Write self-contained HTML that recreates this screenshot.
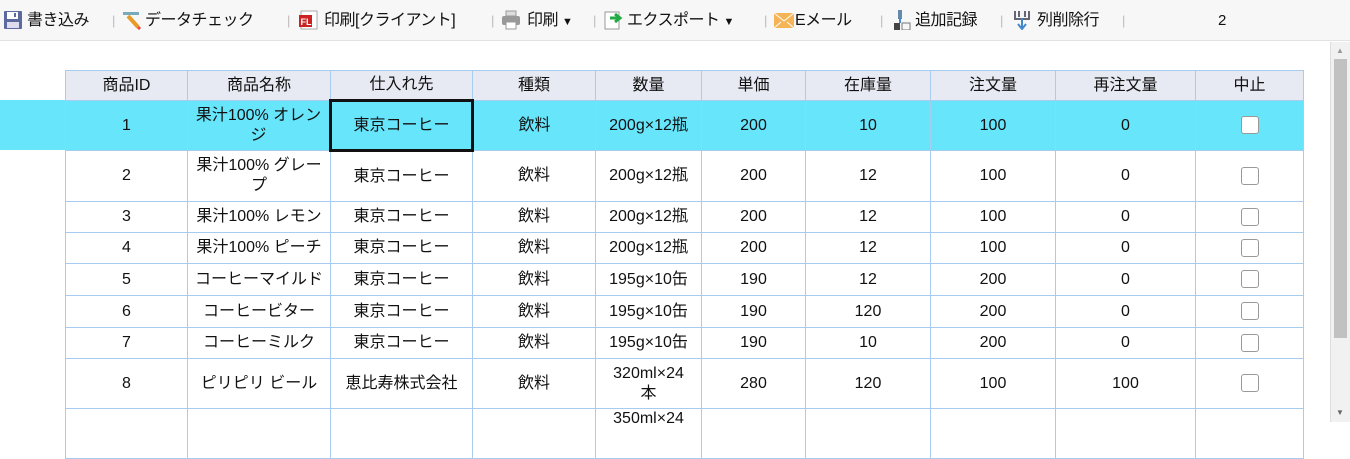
<!DOCTYPE html>
<html><head><meta charset="utf-8"><style>
*{margin:0;padding:0;box-sizing:border-box}
body{width:1350px;height:422px;overflow:hidden;background:#fff;font-family:"Liberation Sans","Noto Sans CJK JP",sans-serif;position:relative;color:#111}
#tb{position:absolute;left:0;top:0;width:1350px;height:41px;background:#f7f7f7;border-bottom:1px solid #e2e2e2;font-size:16px;white-space:nowrap}
#tb span{position:absolute;top:11px;line-height:20px;letter-spacing:-0.5px}
.sep{color:#bbb;font-size:13px}
.ic{position:absolute;top:10px;width:20px;height:20px}
#hl{position:absolute;left:0;top:100px;width:1303px;height:50px;background:#67e5fb}
table{position:absolute;left:65px;top:70px;border-collapse:collapse;table-layout:fixed;font-size:16px}
td,th{border:1px solid #a8ccee;text-align:center;font-weight:normal;padding:0;line-height:20px;overflow:hidden;white-space:nowrap}
th{background:#e8eaf3;height:30px;border-top:1px solid #a8ccee}
tr.s td{background:#67e5fb}
.cb{display:inline-block;width:18px;height:18px;border:1px solid #999;border-radius:3px;background:#fff;vertical-align:middle}
#sb{position:absolute;left:1330px;top:42px;width:20px;height:380px;background:#f1f1f1;border-left:1px solid #ddd}
#th{position:absolute;left:1334px;top:59px;width:13px;height:279px;background:#c1c1c1}
</style></head><body>
<div id="tb">
<svg class="ic" style="left:3px" viewBox="0 0 20 20"><rect x="1" y="1" width="18" height="18" fill="#5d6a9e" rx="1"/><rect x="4" y="2" width="11" height="7" fill="#fff"/><rect x="11" y="3" width="2" height="4" fill="#5d6a9e"/><rect x="4" y="12" width="12" height="6" fill="#dde"/></svg>
<span style="left:27px">書き込み</span><span class="sep" style="left:112px">|</span>
<svg class="ic" style="left:122px" viewBox="0 0 20 20"><rect x="1" y="2" width="16" height="3" fill="#7ab"/><path d="M6 6 L16 17" stroke="#e99b2a" stroke-width="4"/><path d="M16 17l2 2" stroke="#e44" stroke-width="3"/></svg>
<span style="left:145px">データチェック</span><span class="sep" style="left:287px">|</span>
<svg class="ic" style="left:298px" viewBox="0 0 20 20"><rect x="3" y="1" width="16" height="18" fill="#fff" stroke="#aaa"/><rect x="1" y="5" width="13" height="12" fill="#c22"/><text x="2.5" y="15" font-size="9" fill="#fff" font-family="Liberation Sans" font-weight="bold">FL</text></svg>
<span style="left:324px">印刷[クライアント]</span><span class="sep" style="left:491px">|</span>
<svg class="ic" style="left:501px" viewBox="0 0 20 20"><rect x="5" y="1" width="10" height="5" fill="#ddd" stroke="#999"/><rect x="1" y="6" width="18" height="9" fill="#999" rx="2"/><rect x="5" y="12" width="10" height="7" fill="#fff" stroke="#999"/></svg>
<span style="left:527px">印刷 <small style="font-size:11px">▼</small></span><span class="sep" style="left:593px">|</span>
<svg class="ic" style="left:603px" viewBox="0 0 20 20"><rect x="2" y="2" width="14" height="17" fill="#fff" stroke="#999"/><path d="M7 8h8M12 4l5 4-5 4" stroke="#2a4" stroke-width="3" fill="none"/></svg>
<span style="left:627px">エクスポート <small style="font-size:11px">▼</small></span><span class="sep" style="left:764px">|</span>
<svg class="ic" style="left:774px" viewBox="0 0 20 20"><rect x="0" y="3" width="20" height="15" fill="#f5b456"/><path d="M0 3l10 8 10-8M0 18l7-6M20 18l-7-6" stroke="#fff" fill="none"/></svg>
<span style="left:795px">Eメール</span><span class="sep" style="left:880px">|</span>
<svg class="ic" style="left:892px" viewBox="0 0 20 20"><rect x="6" y="0" width="4" height="9" fill="#68a"/><path d="M8 8v5" stroke="#48c" stroke-width="2"/><rect x="2" y="13" width="6" height="7" fill="#444"/><rect x="10" y="13" width="8" height="7" fill="none" stroke="#777"/></svg>
<span style="left:915px">追加記録</span><span class="sep" style="left:1000px">|</span>
<svg class="ic" style="left:1012px" viewBox="0 0 20 20"><path d="M3 1v8h14V1M7 1v6M13 1v6" stroke="#667" stroke-width="2" fill="none"/><path d="M10 8v10M6 14l4 5 4-5" stroke="#48c" stroke-width="2" fill="none"/></svg>
<span style="left:1037px">列削除行</span><span class="sep" style="left:1122px">|</span>
<span style="left:1218px;font-size:15px">2</span>
</div>
<div id="hl"></div>
<table>
<colgroup><col style="width:122px"><col style="width:143px"><col style="width:142px"><col style="width:123px"><col style="width:106px"><col style="width:104px"><col style="width:125px"><col style="width:125px"><col style="width:140px"><col style="width:108px"></colgroup>
<tr><th>商品ID</th><th>商品名称</th><th>仕入れ先</th><th>種類</th><th>数量</th><th>単価</th><th>在庫量</th><th>注文量</th><th>再注文量</th><th>中止</th></tr>
<tr class="s" style="height:50px"><td>1</td><td>果汁100% オレン<br>ジ</td><td style="border:3px solid #111">東京コーヒー</td><td>飲料</td><td>200g×12瓶</td><td>200</td><td>10</td><td>100</td><td>0</td><td><span class="cb"></span></td></tr>
<tr style="height:51px"><td>2</td><td>果汁100% グレー<br>プ</td><td>東京コーヒー</td><td>飲料</td><td>200g×12瓶</td><td>200</td><td>12</td><td>100</td><td>0</td><td><span class="cb"></span></td></tr>
<tr style="height:31px"><td>3</td><td>果汁100% レモン</td><td>東京コーヒー</td><td>飲料</td><td>200g×12瓶</td><td>200</td><td>12</td><td>100</td><td>0</td><td><span class="cb"></span></td></tr>
<tr style="height:31px"><td>4</td><td>果汁100% ピーチ</td><td>東京コーヒー</td><td>飲料</td><td>200g×12瓶</td><td>200</td><td>12</td><td>100</td><td>0</td><td><span class="cb"></span></td></tr>
<tr style="height:32px"><td>5</td><td>コーヒーマイルド</td><td>東京コーヒー</td><td>飲料</td><td>195g×10缶</td><td>190</td><td>12</td><td>200</td><td>0</td><td><span class="cb"></span></td></tr>
<tr style="height:32px"><td>6</td><td>コーヒービター</td><td>東京コーヒー</td><td>飲料</td><td>195g×10缶</td><td>190</td><td>120</td><td>200</td><td>0</td><td><span class="cb"></span></td></tr>
<tr style="height:31px"><td>7</td><td>コーヒーミルク</td><td>東京コーヒー</td><td>飲料</td><td>195g×10缶</td><td>190</td><td>10</td><td>200</td><td>0</td><td><span class="cb"></span></td></tr>
<tr style="height:50px"><td>8</td><td>ピリピリ ビール</td><td>恵比寿株式会社</td><td>飲料</td><td>320ml×24<br>本</td><td>280</td><td>120</td><td>100</td><td>100</td><td><span class="cb"></span></td></tr>
<tr style="height:50px"><td></td><td></td><td></td><td></td><td style="vertical-align:top">350ml×24</td><td></td><td></td><td></td><td></td><td></td></tr>
</table>
<div id="sb"></div><div id="th"></div>
<div style="position:absolute;left:1336px;top:46px;font-size:8px;color:#999">▲</div>
<div style="position:absolute;left:1336px;top:408px;font-size:8px;color:#666">▼</div>
</body></html>
